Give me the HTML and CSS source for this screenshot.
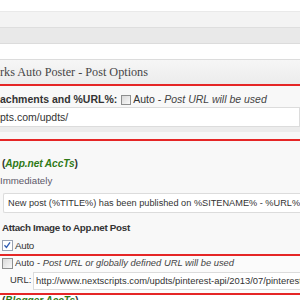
FILE: index.html
```html
<!DOCTYPE html>
<html>
<head>
<meta charset="utf-8">
<link rel="stylesheet" href="styles.css">
</head>
<body>
<div class="page">
  <div class="adminbar">
    <div class="band band-a"></div>
    <div class="band band-b"></div>
  </div>
  <div class="metabox">
    <div class="mb-head"><h3 class="mb-title">rks Auto Poster - Post Options</h3></div>
    <div class="hl hl-top">
      <div class="opt-row"><span class="lbl">achments and %URL%:</span><span class="cb cb-inline"></span><span class="opt-text">Auto - <i>Post URL will be used</i></span></div>
      <div class="field field-url">pts.com/updts/</div>
      <div class="sep"></div>
    </div>
    <div class="net">
      <div class="net-title">(<i>App.net AccTs</i>)</div>
      <div class="net-when">Immediately</div>
      <div class="field field-msg">New post (%TITLE%) has been published on %SITENAME% - %URL%</div>
      <div class="net-label">Attach Image to App.net Post</div>
      <div class="chk-row chk-img"><span class="cb cb-on"><svg viewBox="0 0 11 11" width="9" height="9"><path d="M1.8 5.2 L4.2 7.8 L8.6 1.6" fill="none" stroke="#2f5cb3" stroke-width="1.6"/></svg></span><span class="auto-txt">Auto</span></div>
    </div>
    <div class="hl hl-bottom">
      <div class="chk-row chk-url"><span class="cb"></span><span>Auto - <i>Post URL or globally defined URL will be used</i></span></div>
      <div class="url-row"><span class="url-lbl">URL:</span><div class="field field-link">http://www.nextscripts.com/updts/pinterest-api/2013/07/pinterest-api-update/</div></div>
    </div>
    <div class="net-next">(<i>Blogger AccTs</i>)</div>
  </div>
</div>
</body>
</html>
```

FILE: styles.css
```css
* { box-sizing: border-box; margin: 0; padding: 0; }
html, body { width: 300px; height: 300px; overflow: hidden; background: #fff; }
body { font-family: "Liberation Sans", Arial, sans-serif; color: #333; }
.page { width: 300px; overflow: hidden; }

.adminbar { margin-top: 11px; }
.band-a { height: 16px; border-top: 1px solid #e9e9e9; background: #f3f3f3; }
.band-b { height: 17px; border-top: 1px solid #dedede; border-bottom: 1px solid #dcdcdc; background: #e9e9e9; }

.metabox { margin-top: 15px; }
.mb-head { height: 25px; border-top: 1px solid #dcdcdc; background: linear-gradient(#f6f6f6, #ececec); }
.mb-title { font: normal 12.2px/24px "Liberation Serif", "Times New Roman", serif; color: #464646; white-space: nowrap; }

.hl { border-top: 2px solid #e52626; border-bottom: 2px solid #e52626; }

.opt-row { height: 21px; padding-top: 5px; line-height: 16px; font-size: 10.5px; background: #f8f8f8; white-space: nowrap; }
.lbl { font-weight: bold; }
.cb { display: inline-block; width: 11px; height: 11px; border: 1px solid #8e8f8f; background: linear-gradient(135deg, #d9d9d9, #f9f9f9); }
.cb-inline { width: 10px; height: 10px; vertical-align: -2px; margin: 0 2px 0 4px; }
.opt-text i { color: #444; }

.field { background: #fff; border: 1px solid #dcdcdc; white-space: nowrap; overflow: hidden; }
.field-url { height: 20px; border-left: 0; font-size: 10.5px; line-height: 18px; color: #333; }
.sep { height: 12px; background: linear-gradient(#ececec 0, #ececec 5px, #f7f7f7 5px); }

.net { height: 113px; padding-top: 15px; background: #f8f8f8; }
.net-title { padding-left: 2px; font-size: 10.2px; font-weight: bold; line-height: 15px; letter-spacing: -0.1px; }
.net-title i, .net-next i { color: #2f7a16; }
.net-when { margin-top: 2px; font-size: 9.7px; line-height: 15px; color: #5d586a; }
.field-msg { height: 20px; margin: 5px 0 0 3px; padding: 1px 4px 0; font-size: 9.2px; line-height: 17px; color: #333; border-right: 0; border-radius: 2px 0 0 2px; }
.net-label { margin-top: 8px; padding-left: 2px; font-size: 9.8px; font-weight: bold; line-height: 14px; letter-spacing: -0.3px; }

.chk-row { display: flex; align-items: center; gap: 2px; padding-left: 2px; font-size: 9.4px; white-space: nowrap; }
.chk-img { height: 16px; margin-top: 2px; }
.auto-txt { font-size: 9.8px; letter-spacing: -0.3px; }
.cb-on { display: flex; align-items: center; justify-content: center; border-color: #9aa3b3; background: #fff; }
.chk-url { height: 14px; line-height: 14px; }
.chk-url i { color: #444; }

.hl-bottom { padding-bottom: 3px; background: #fbfbfb; }
.url-row { display: flex; align-items: flex-start; height: 18px; margin-top: 2px; font-size: 9.4px; }
.url-lbl { width: 33px; flex: none; padding-left: 10px; line-height: 16px; }
.field-link { flex: none; width: 300px; height: 18px; padding-left: 2px; line-height: 16px; border-right: 0; }

.net-next { padding: 1px 0 0 2px; font-size: 10px; font-weight: bold; line-height: 9px; white-space: nowrap; }
```
